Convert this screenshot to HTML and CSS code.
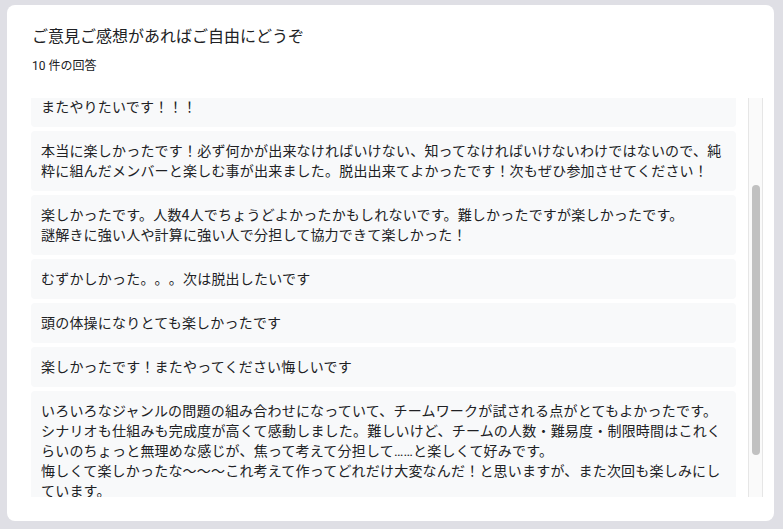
FILE: index.html
```html
<!DOCTYPE html>
<html lang="ja">
<head>
<meta charset="utf-8">
<title>回答</title>
<link rel="stylesheet" href="styles.css">
</head>
<body>
<div class="card">
  <div class="title">ご意見ご感想があればご自由にどうぞ</div>
  <div class="count">10 件の回答</div>
  <div class="area">
    <div class="list">
      <div class="list-inner">
        <div class="item">またやりたいです！！！</div>
        <div class="item">本当に楽しかったです！必ず何かが出来なければいけない、知ってなければいけないわけではないので、純粋に組んだメンバーと楽しむ事が出来ました。脱出出来てよかったです！次もぜひ参加させてください！</div>
        <div class="item">楽しかったです。人数4人でちょうどよかったかもしれないです。難しかったですが楽しかったです。<br>謎解きに強い人や計算に強い人で分担して協力できて楽しかった！</div>
        <div class="item">むずかしかった。。。次は脱出したいです</div>
        <div class="item">頭の体操になりとても楽しかったです</div>
        <div class="item">楽しかったです！またやってください悔しいです</div>
        <div class="item">いろいろなジャンルの問題の組み合わせになっていて、チームワークが試される点がとてもよかったです。<br>シナリオも仕組みも完成度が高くて感動しました。難しいけど、チームの人数・難易度・制限時間はこれくらいのちょっと無理めな感じが、焦って考えて分担して……と楽しくて好みです。<br>悔しくて楽しかったな〜〜〜これ考えて作ってどれだけ大変なんだ！と思いますが、また次回も楽しみにし<br>ています。</div>
      </div>
    </div>
    <div class="scrollbar"><div class="thumb"></div></div>
  </div>
</div>
</body>
</html>
```

FILE: styles.css
```css
html, body {
  margin: 0;
  padding: 0;
}
body {
  background: #dfdfe5;
  padding: 5px 9px 8px 7px;
  font-family: "Roboto", "Noto Sans CJK JP", sans-serif;
  color: #202124;
}
.card {
  background: #ffffff;
  border-radius: 8px;
  padding: 20px 11px 24px 24px;
  height: 516px;
  box-sizing: border-box;
  display: flex;
  flex-direction: column;
}
.title {
  font-size: 16px;
  line-height: 24px;
  padding-left: 1px;
  text-spacing-trim: space-all;
}
.count {
  font-size: 12px;
  line-height: 16px;
  margin-top: 9px;
  padding-left: 1px;
}
.area {
  margin-top: 24px;
  display: flex;
  gap: 12px;
  height: 399px;
}
.list {
  flex: 1;
  overflow: hidden;
}
.list-inner {
  margin-top: -11px;
  display: flex;
  flex-direction: column;
  gap: 4px;
}
.item {
  background: #f8f9fa;
  border-radius: 4px;
  padding: 10px;
  font-size: 14px;
  line-height: 20px;
  letter-spacing: 0.2px;
  text-spacing-trim: space-all;
  word-break: break-all;
}
.scrollbar {
  width: 15px;
  box-sizing: border-box;
  border-left: 1px solid #e6e6e6;
  border-right: 1px solid #e6e6e6;
  background: #fafafa;
  padding-left: 3px;
}
.thumb {
  width: 8px;
  height: 270px;
  margin-top: 87px;
  border-radius: 4px;
  background: #c1c1c1;
}
```
